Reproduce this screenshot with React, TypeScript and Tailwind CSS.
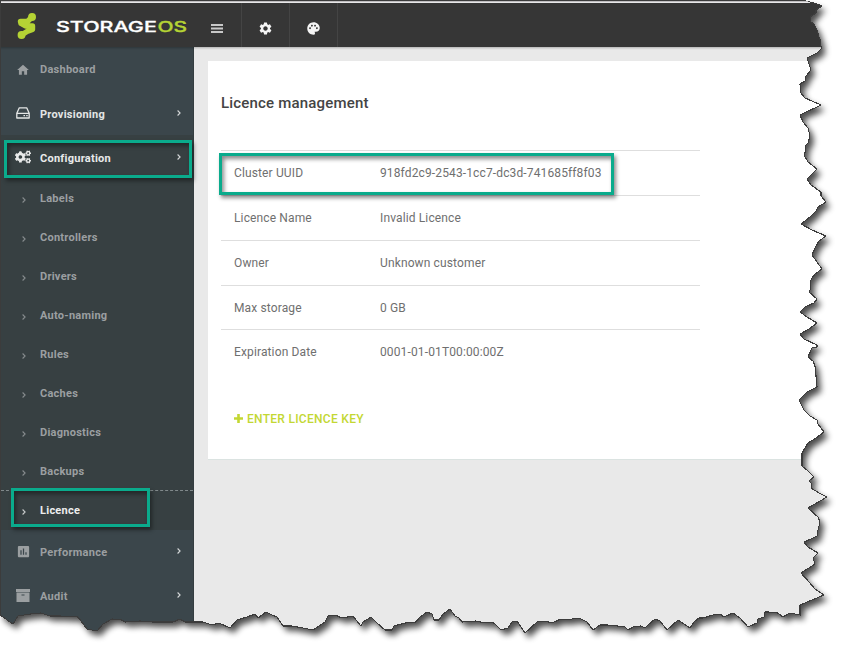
import React from "react";
import { MdHome, MdSettings, MdPalette, MdAssessment } from "react-icons/md";
import { FaCogs } from "react-icons/fa";

const TEAR =
  "M0 1H806L814 3L822 6L816 10L816 13L810 17L811 22L814 24L817 30L819 37L821 42L820 45L822 48L817 53L807 58L809 64L811 70L806 76L805 81L800 84L801 93L805 98L812 101L821 105L815 108L806 112L800 115L803 122L808 128L810 136L808 143L805 146L806 150L804 155L808 162L817 169L813 173L807 179L811 185L821 192L821 196L826 202L818 207L816 211L810 217L801 224L812 230L826 236L819 241L816 246L812 255L822 269L815 274L812 278L810 282L811 288L809 292L817 299L814 303L805 307L800 312L807 317L817 323L809 329L800 334L804 339L817 345L817 347L812 348L808 357L813 361L815 366L816 376L817 387L807 392L799 400L804 410L810 416L817 420L818 424L824 432L816 438L808 443L802 453L802 466L808 471L814 477L809 481L812 484L811 488L819 493L827 497L808 508L818 517L820 522L818 530L817 536L811 539L804 542L808 547L818 553L813 558L815 564L801 573L809 582L815 589L824 595L812 600L800 605L800 615L790 613L783 617L778 613L768 612L765 612L764 617L758 619L757 623L748 627L740 618L733 613L724 617L720 614L713 615L703 618L699 618L694 622L690 628L684 624L678 620L667 630L660 621L655 619L648 625L645 628L641 626L633 627L628 630L625 627L618 626L607 625L600 625L593 630L587 622L579 618L565 620L561 619L552 623L545 621L537 622L525 633L521 627L517 621L512 622L508 628L501 630L494 623L480 622L476 621L462 622L459 618L455 616L450 609L443 614L439 620L434 620L432 614L427 612L420 617L416 622L405 623L394 626L392 630L385 630L377 623L371 617L363 622L361 626L353 616L342 618L335 615L328 616L325 622L313 630L303 628L292 626L283 626L277 617L272 615L266 612L258 618L255 614L247 617L237 620L230 628L219 623L212 625L203 622L192 622L185 622L180 619L173 622L153 622L140 621L125 622L122 620L112 619L103 624L97 631L87 629L78 617L60 616L50 616L41 613L30 614L18 616L13 624L0 615Z";

const subItems = ["Labels", "Controllers", "Drivers", "Auto-naming", "Rules", "Caches", "Diagnostics", "Backups", "Licence"];

const rows = [
  ["Cluster UUID", "918fd2c9-2543-1cc7-dc3d-741685ff8f03"],
  ["Licence Name", "Invalid Licence"],
  ["Owner", "Unknown customer"],
  ["Max storage", "0 GB"],
  ["Expiration Date", "0001-01-01T00:00:00Z"],
];

function Chevron({ className }: { className: string }) {
  return (
    <svg className={className} width="4" height="6" viewBox="0 0 4 6" fill="none" stroke="currentColor" strokeWidth="1.1">
      <path d="M.6 .5L3.1 3L.6 5.5" />
    </svg>
  );
}

function NavItem({ icon, label, className, arrow = true }: { icon: React.ReactNode; label: string; className: string; arrow?: boolean }) {
  return (
    <div className={`flex items-center pl-[14px] pr-[12px] ${className}`}>
      <span className="flex w-[16px] justify-center">{icon}</span>
      <span className="ml-[9px] flex-1 pt-[2px]">{label}</span>
      {arrow && <Chevron className="mb-[3px] text-[#d5d8d9]" />}
    </div>
  );
}

function DriveIcon() {
  return (
    <svg className="mb-[2px]" width="14" height="12" viewBox="0 0 14 12" fill="none" stroke="currentColor" strokeWidth="1.3" strokeLinejoin="round">
      <path d="M3.300 .8H10.700L13.200 6.300V11H.8V6.300ZM.8 6.300H13.200M7.500 8.700H9M10.200 8.700H11.700" />
    </svg>
  );
}

function ArchiveIcon() {
  return (
    <svg className="mb-[3px]" width="14" height="13" viewBox="0 0 14 13" fill="currentColor">
      <path d="M0 0H14V3H0ZM.5 3.6H13.5V13H.5ZM5.500 5.500V6.500H8.500V5.500Z" fillRule="evenodd" />
    </svg>
  );
}

function Logo() {
  return (
    <svg width="188" height="44" viewBox="0 0 188 44">
      <g stroke="#b5d334" fill="none" strokeLinecap="round" strokeLinejoin="round">
        <path d="M31.500 14.500L27.500 18.500H20.500L21 20.500L25.500 23H32.500V26.500L27 28.500L21.500 32" strokeWidth="5.400" />
        <path d="M32 14h.1M21.500 32h.1" strokeWidth="7.800" />
      </g>
      <g className="font-[Inter] text-[14.500px] font-medium" strokeWidth=".3">
        <text transform="translate(56 28.500) scale(1.42 1)" fill="#fff" stroke="#fff" textLength="71" lengthAdjust="spacingAndGlyphs">STORAGE</text>
        <text transform="translate(157.500 28.500) scale(1.42 1)" fill="#b5d334" stroke="#b5d334" textLength="20.800" lengthAdjust="spacingAndGlyphs">OS</text>
      </g>
    </svg>
  );
}

function TornEdge() {
  return (
    <svg className="pointer-events-none absolute inset-0 z-20" width="850" height="657" viewBox="0 0 850 657">
      <defs>
        <clipPath id="outside">
          <path d={"M0 0H850V657H0Z" + TEAR} clipRule="evenodd" />
        </clipPath>
        <filter id="soft" x="-5%" y="-5%" width="110%" height="110%">
          <feGaussianBlur stdDeviation="3" />
        </filter>
      </defs>
      <g clipPath="url(#outside)">
        <rect width="850" height="657" fill="#fff" />
        <path d={TEAR} transform="translate(4 5)" fill="#000" opacity=".7" filter="url(#soft)" />
      </g>
      <path d="M0 .5H806" stroke="#3c393c" />
      <path d={TEAR} fill="none" stroke="#3c3c3c" strokeWidth="1.1" shapeRendering="crispEdges" />
      <path d="M1 1.900H808" stroke="#eceaed" strokeWidth="1.300" />
    </svg>
  );
}

export default function App() {
  return (
    <div className="relative flex h-[657px] w-[850px] flex-col overflow-hidden bg-[#e9e9e9] pt-[3px] font-[Roboto,sans-serif]">
      <header className="z-10 flex h-11 shrink-0 border-l border-[#29272a] bg-[#363636] shadow-[0_1px_2px_rgba(0,0,0,.25)]">
        <div className="-ml-px w-[193px]"><Logo /></div>
        <div className="flex w-[49px] items-center justify-center border-r border-[#444] pt-[7px] text-[#c8c8c8]">
          <svg width="12" height="9" viewBox="0 0 12 9" stroke="currentColor" strokeWidth="1.9"><path d="M0 1H12M0 4.500H12M0 8H12" /></svg>
        </div>
        <div className="flex w-12 items-center justify-center border-r border-[#444] pt-[7px] text-[#f4f4f4]"><MdSettings size={15} /></div>
        <div className="flex w-12 items-center justify-center border-r border-[#444] pt-[7px] text-[#f4f4f4]"><MdPalette size={15} /></div>
      </header>
      <div className="flex flex-1">
        <nav className="w-[194px] shrink-0 border-l border-r border-l-[#29272a] border-r-[#343d40] bg-[#3b464b] text-[11px] font-bold tracking-[.26px] text-[#9b9fa1]">
          <NavItem className="h-[45px]" icon={<MdHome size={14} />} label="Dashboard" arrow={false} />
          <NavItem className="h-[43px] pt-px text-[#e4e6e6]" icon={<DriveIcon />} label="Provisioning" />
          <div className="bg-[#374042]">
            <div className="relative h-11 text-[#e9eaea]">
              <NavItem className="h-full pt-[3px]" icon={<FaCogs size={16} className="mb-[4px]" />} label="Configuration" />
              <div className="absolute left-[3px] top-[5px] h-[38px] w-[188px] border-[3px] border-[#0aab8c] shadow-[2px_3px_4px_rgba(0,0,0,.4),inset_2px_3px_4px_rgba(0,0,0,.4)]" />
            </div>
            {subItems.map((label) => {
              const active = label === "Licence";
              return (
                <div key={label} className={`relative flex items-center pl-[21px] ${active ? "-mt-px h-10 border-t border-dashed border-[#80898b] pt-[2px] text-[#edeeee]" : "h-[39px] pt-[2px]"}`}>
                  <Chevron className="mt-px opacity-80" />
                  <span className="ml-[14px]">{label}</span>
                  {active && <div className="absolute -top-[3px] left-[10px] h-[39px] w-[139px] border-[3px] border-[#0aab8c] shadow-[2px_3px_4px_rgba(0,0,0,.4),inset_2px_3px_4px_rgba(0,0,0,.4)]" />}
                </div>
              );
            })}
          </div>
          <NavItem className="h-11 pt-px" icon={<MdAssessment size={15} className="mb-[3px]" />} label="Performance" />
          <NavItem className="h-11 pt-px" icon={<ArchiveIcon />} label="Audit" />
        </nav>
        <main className="flex-1 pl-[14px] pt-[14px]">
          <section className="h-[399px] border-b border-[#dbe3e1] bg-white pl-[13px]">
            <h1 className="pt-[32px] text-[15px] font-medium leading-5 tracking-[.19px] text-[#444]">Licence management</h1>
            <div className="relative mt-[37px] w-[479px] text-[12px] tracking-[.13px] text-[#6f6f6f]">
              {rows.map(([name, value], i) => (
                <div key={name} className={`flex items-center border-t border-[#dedede] pl-[13px] ${i === 3 ? "h-[44px]" : "h-[45px]"}`}>
                  <span className="w-[146px]">{name}</span>
                  <span>{value}</span>
                </div>
              ))}
              <div className="absolute -left-[2px] top-[3px] h-[42px] w-[395px] border-[3px] border-[#0aab8c] shadow-[2px_3px_4px_rgba(0,0,0,.45),inset_2px_3px_4px_rgba(0,0,0,.45)]" />
            </div>
            <div className="mt-[37px] flex items-center gap-[4px] pl-[13px] text-[12px] font-medium leading-4 tracking-[.28px] text-[#c3d733]">
              <svg className="mb-px" width="9" height="9" viewBox="0 0 9 9" stroke="currentColor" strokeWidth="2.600"><path d="M4.500 0V9M0 4.500H9" /></svg>
              ENTER LICENCE KEY
            </div>
          </section>
        </main>
      </div>
      <TornEdge />
    </div>
  );
}
